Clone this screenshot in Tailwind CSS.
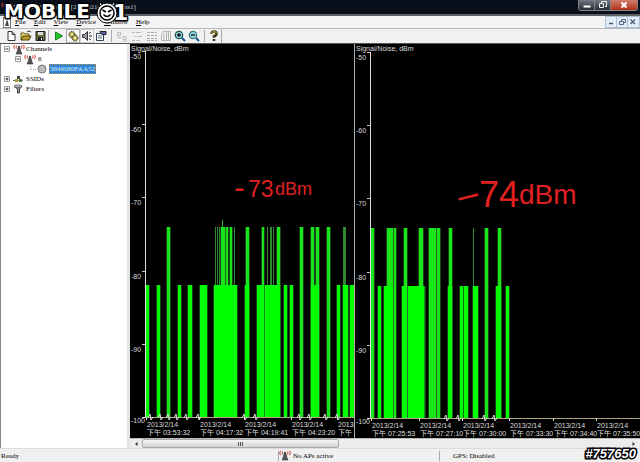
<!DOCTYPE html>
<html lang="en">
<head>
<meta charset="utf-8">
<meta name="viewport" content="width=device-width, initial-scale=1">
<title>Network Stumbler</title>
<script src="https://cdn.jsdelivr.net/npm/@tailwindcss/browser@4"></script>
</head>
<body class="relative flex h-screen flex-col overflow-hidden bg-[#f0f0f0] font-['Liberation_Serif','Noto_Sans_CJK_TC',serif] text-[7px] leading-[10px] text-black">

<svg class="hidden" aria-hidden="true">
  <symbol id="antenna" viewBox="0 0 12 11">
    <path d="M5 4h2l1 4 1 2H3l1-2z" fill="#555" stroke="#333" stroke-width=".6"/>
    <circle cx="6" cy="3" r="1.2" fill="#444"/>
    <path d="M3.500 1.500q-1 1.500 0 3M1.500.8q-1.500 2.200 0 4.400M8.500 1.500q1 1.500 0 3M10.500.8q1.500 2.200 0 4.400" fill="none" stroke="#c8443c" stroke-width="1"/>
  </symbol>
  <symbol id="minus" viewBox="0 0 8 8"><path d="M1.500 1.500h5v5h-5z" fill="#fff" stroke="#999"/><path d="M2.500 4h3" stroke="#333"/></symbol>
  <symbol id="plus" viewBox="0 0 8 8"><path d="M1.500 1.500h5v5h-5z" fill="#fff" stroke="#999"/><path d="M2.500 4h3M4 2.500v3" stroke="#333"/></symbol>
</svg>

<!-- Title bar -->
<header class="flex h-4 shrink-0 items-start border-b-2 border-[#5d6065] bg-[#0a101b] pl-px pr-[2px] text-[#c5cad2]">
  <svg class="mt-[2px] h-[11px] w-3"><use href="#antenna"/></svg>
  <h1 class="mt-[2px] flex-1 whitespace-nowrap">Network Stumbler - [20130214155353.ns1]</h1>
  <div class="flex h-[11px] overflow-hidden rounded-b-[3px] border border-t-0 border-[#83878d]">
    <button aria-label="Minimize" class="flex w-4 items-center justify-center border-r border-[#83878d] bg-linear-to-b from-[#737983] to-[#292f39]"><svg width="10" height="8"><path d="M1.500 4.500h7v2h-7z" fill="#fff"/></svg></button>
    <button aria-label="Restore" class="flex w-4 items-center justify-center border-r border-[#83878d] bg-linear-to-b from-[#737983] to-[#292f39]"><svg width="10" height="8" fill="none" stroke="#eee"><path d="M3.500 2V.5h5v5H7"/><path d="M1.500 2.500h4v4h-4z"/></svg></button>
    <button aria-label="Close" class="flex w-[26px] items-center justify-center bg-linear-to-b from-[#cf7e6d] to-[#b32d14]"><svg width="10" height="8" stroke="#fff" stroke-width="2"><path d="M2.500 1.500l5 5M7.500 1.500l-5 5"/></svg></button>
  </div>
</header>

<!-- Menu bar -->
<nav class="flex h-3 shrink-0 items-center gap-2 bg-[#f3f3f3] pl-[3px]">
  <svg width="8" height="11" class="-mr-1 border border-[#777] bg-white"><path d="M3 1L5 8H1z" fill="#444"/></svg>
  <button><u>F</u>ile</button>
  <button><u>E</u>dit</button>
  <button><u>V</u>iew</button>
  <button><u>D</u>evice</button>
  <button><u>W</u>indow</button>
  <button><u>H</u>elp</button>
  <div class="ml-auto flex h-full divide-x divide-[#a9bdd4] border border-[#a9bdd4] bg-[#e2edf8]">
    <button aria-label="Minimize document" class="w-[11px]"><svg width="10" height="10"><path d="M3 6.500h4" stroke="#456" stroke-width="1.500"/></svg></button>
    <button aria-label="Restore document" class="w-[11px]"><svg width="10" height="10" fill="none" stroke="#567"><path d="M4.500 4V2.500h4v3H7M2.500 4.500h4v3h-4z"/></svg></button>
    <button aria-label="Close document" class="w-[11px]"><svg width="10" height="10" stroke="#567" stroke-width="1.500"><path d="M2.500 2.500l4.500 4.500M7 2.500L2.500 7"/></svg></button>
  </div>
</nav>

<!-- Toolbar -->
<div role="toolbar" class="flex h-4 shrink-0 items-center border-t border-b border-t-[#b8b8b8] border-b-[#555] bg-[#f1f1f1] pl-1">
  <button aria-label="New" class="w-[15px]"><svg width="14" height="14"><path d="M4 2.500h4l3 3v6H4z" fill="#fff" stroke="#333"/><path d="M8 2.500v3h3" fill="none" stroke="#333"/></svg></button>
  <button aria-label="Open" class="w-[14px]"><svg width="14" height="14"><path d="M2 11V4h3l1 1h4v2" fill="#f2dc73" stroke="#6b5c1a"/><path d="M2 11l2-4h8l-2 4z" fill="#bd9d2c" stroke="#4c4210"/><path d="M8 3q2-2 4 0" fill="none" stroke="#333"/></svg></button>
  <button aria-label="Save" class="w-[15px]"><svg width="14" height="14"><path d="M3 2.500h9v9H3z" fill="#69693c" stroke="#222"/><path d="M5 3h5v3H5z" fill="#ddd"/><path d="M5 8h5v3H5z" fill="#222"/><path d="M8 9h1v2H8z" fill="#eee"/></svg></button>
  <span class="mr-[3px] h-3 w-px bg-[#aaa]"></span>
  <button aria-label="Enable scan" class="w-[14px]"><svg width="14" height="14"><path d="M3.500 3l7 4-7 4z" fill="#20ca28" stroke="#167c1c"/></svg></button>
  <button aria-label="Auto reconfigure" aria-pressed="true" class="w-[14px] border border-[#aaa] bg-[#fafafa]"><svg width="12" height="12"><g fill="#b5aa4c" stroke="#363418"><circle cx="5" cy="4.500" r="3" stroke-dasharray="1.500 .6"/><circle cx="8" cy="8" r="3" stroke-dasharray="1.500 .6"/></g><circle cx="5" cy="4.500" r="1" fill="#fff"/><circle cx="8" cy="8" r="1" fill="#fff"/></svg></button>
  <button aria-label="Sound" aria-pressed="true" class="w-[14px] border border-[#ccc] bg-[#fafafa]"><svg width="12" height="12"><path d="M1.500 4.500h2l3-3v9l-3-3h-2z" fill="#99a" stroke="#333"/><path d="M8 6h3M8 3.500L10 2M8 8.500l2 1.500" stroke="#333"/></svg></button>
  <button aria-label="Options" class="w-[14px]"><svg width="14" height="14"><path d="M2.500 4.500h7v7h-7z" fill="#fff" stroke="#345"/><path d="M4 7h4M4 9h4" stroke="#567"/><path d="M6 2.500h6v3H8z" fill="#5a6caa" stroke="#223"/></svg></button>
  <span class="mr-1 ml-[3px] h-3 w-px bg-[#aaa]"></span>
  <button disabled aria-label="Large icons" class="w-[14px]"><svg width="12" height="14" fill="none" stroke="#bbb"><path d="M1.500 3.500h3v3h-3zM7 7.500h3v3H7zM1 8.500h4M7 12h4"/></svg></button>
  <button disabled aria-label="Small icons" class="w-[15px]"><svg width="14" height="14" stroke="#bbb"><path d="M2 3.500h3M6 3.500h5M4 7.500h3M8 7.500h4M2 11.500h3M6 11.500h4"/></svg></button>
  <button disabled aria-label="List" class="w-[14px]"><svg width="14" height="14" stroke="#aaa" stroke-dasharray="3 1"><path d="M2 3.500h10M2 6.500h10M2 9.500h10M2 11.500h10"/></svg></button>
  <button disabled aria-label="Details" class="w-[14px]"><svg width="14" height="14" fill="none" stroke="#b3b3b3"><path d="M2.500 5.500l2-3h7v9h-9zM5 5v6M7.500 3v8M9.500 3v8"/></svg></button>
  <button aria-label="Zoom in" class="w-[14px]"><svg width="14" height="14"><circle cx="6" cy="6" r="3.700" fill="#8ed7dc" stroke="#204f57" stroke-width="1.200"/><path d="M9 9l3 3" stroke="#14528c" stroke-width="2"/><path d="M4 6h4M6 4v4" stroke="#111" stroke-width="1.300"/></svg></button>
  <button aria-label="Zoom out" class="w-[15px]"><svg width="14" height="14"><circle cx="6" cy="6" r="3.700" fill="#8ed7dc" stroke="#3b7780" stroke-width="1.200"/><path d="M9 9l3 3" stroke="#14528c" stroke-width="2"/><path d="M4 6h4" stroke="#111" stroke-width="1.300"/></svg></button>
  <span class="mx-[2px] h-3 w-px bg-[#aaa]"></span>
  <button aria-label="Help" class="w-[14px]"><svg width="14" height="14" fill="none"><path d="M4.500 5q0-2.500 2.500-2.500t2.500 2.200Q9.500 6.500 7 7.500v1.200M7 10v2" stroke="#3a3510" stroke-width="2.600"/><path d="M4.500 4.800q.2-2.200 2.500-2.200t2.400 2" stroke="#c9b54a"/></svg></button>
  <span class="h-full w-px bg-[#aaa]"></span>
</div>

<main class="flex min-h-0 flex-1">
  <!-- Channel tree -->
  <aside class="w-[130px] shrink-0 border-r-3 border-l border-r-[#e4e4e4] border-l-[#888] bg-white">
    <ul>
      <li class="flex h-[10px] items-center pl-[2px]"><svg class="size-2"><use href="#minus"/></svg><svg class="mr-px ml-[2px] h-[11px] w-3"><use href="#antenna"/></svg><span>Channels</span></li>
      <li class="flex h-[10px] items-center pl-[13px]"><svg class="size-2"><use href="#minus"/></svg><svg class="mr-[2px] ml-[2px] h-[11px] w-3"><use href="#antenna"/></svg>6</li>
      <li class="flex h-[10px] items-center pl-[29px]"><svg width="18" height="10" class="mr-px"><path d="M.5 0v5.500H7" fill="none" stroke="#aaa" stroke-dasharray="1 1"/><circle cx="12" cy="5" r="4" fill="#bbb" stroke="#777"/></svg><a href="#" class="bg-[#2f86d6] px-px text-[#d6ebff] outline-1 -outline-offset-1 outline-dotted outline-[#bb8844]">3846080FAA52</a></li>
      <li class="flex h-[10px] items-center pl-[2px]"><svg class="size-2"><use href="#plus"/></svg><svg width="12" height="10" class="mr-[2px] ml-px"><path d="M1 6.500h10" stroke="#777"/><path d="M5 2h3v3H5z" fill="#444"/><path d="M3 5h3v3H3z" fill="#ab9c30"/><path d="M7 5h3v3H7z" fill="#567a45"/></svg>SSIDs</li>
      <li class="flex h-[10px] items-center pl-[2px]"><svg class="size-2"><use href="#plus"/></svg><svg width="12" height="10" class="mr-[2px] ml-px"><path d="M2 2.500h8L7.500 5v4h-2V5z" fill="#999" stroke="#444"/><ellipse cx="6" cy="2.200" rx="4" ry="1.200" fill="#ccc" stroke="#444" stroke-width=".7"/></svg>Filters</li>
    </ul>
  </aside>

  <section class="flex min-w-0 flex-1 flex-col bg-black">
    <div class="grid min-h-0 flex-1 grid-cols-[225fr_285fr] font-['Liberation_Sans','Noto_Sans_CJK_TC',sans-serif]">
      <svg id="chart-a" class="h-full w-full border-r border-[#aaa] bg-black" viewBox="130 44 224 394" preserveAspectRatio="xMinYMin slice" fill="#ddd" font-size="7">
        <text x="131" y="51">Signal/Noise, dBm</text>
        <g fill="#e02020">
          <text x="234" y="198" font-size="32">-</text><text x="248" y="197" font-size="23">73</text><text x="275" y="195" font-size="18">dBm</text>
        </g>
      </svg>
      <svg id="chart-b" class="h-full w-full bg-black" viewBox="355 44 285 394" preserveAspectRatio="xMinYMin slice" fill="#ddd" font-size="7">
        <text x="356" y="51">Signal/Noise, dBm</text>
        <g fill="#e02020">
          <text x="458" y="207" font-size="36" transform="rotate(-14 465 196)">–</text><text x="479" y="207" font-size="36">74</text><text x="519" y="204" font-size="28">dBm</text>
        </g>
      </svg>
    </div>
    <!-- Horizontal scroll bar -->
    <div class="flex h-[10px] shrink-0 items-center justify-between border-t border-[#bbb] bg-[#ececec]">
      <div class="flex h-full w-[41%] items-center">
        <button aria-label="Scroll left" class="flex h-full w-3 shrink-0 items-center justify-center"><svg width="4" height="6"><path d="M3.500 1v4L1 3z" fill="#333"/></svg></button>
        <div class="flex h-full flex-1 items-center justify-center gap-px rounded-xs border border-[#aaa] bg-linear-to-b from-[#f6f6f6] to-[#d4d4d4]"><i class="h-1 w-px bg-[#555]"></i><i class="h-1 w-px bg-[#555]"></i><i class="h-1 w-px bg-[#555]"></i></div>
      </div>
      <button aria-label="Scroll right" class="flex h-full w-3 items-center justify-center"><svg width="4" height="6"><path d="M.5 1v4L3 3z" fill="#333"/></svg></button>
    </div>
  </section>
</main>

<!-- Status bar -->
<footer class="flex h-[14px] shrink-0 items-center border-t border-[#ddd] bg-[#f0f0f0]">
  <p class="w-[278px] shrink-0 pl-px">Ready</p>
  <p class="flex h-[10px] w-[161px] shrink-0 items-center gap-[2px] border-l border-[#aaa]"><svg class="h-[11px] w-3"><use href="#antenna"/></svg>No APs active</p>
  <p class="h-[10px] flex-1 border-l border-[#aaa] pl-[13px]">GPS: Disabled</p>
</footer>

<!-- Watermarks -->
<svg class="pointer-events-none absolute top-0 left-0" width="130" height="28" role="img" aria-label="Mobile01">
  <g font-family="DejaVu Sans" font-weight="bold" fill="#fff" stroke="#000" stroke-width="3" stroke-linejoin="round" paint-order="stroke">
    <text x="4" y="18" font-size="20">MOBILE</text>
    <text x="113" y="20" font-size="22">1</text>
  </g>
  <path d="M100 8l-1-6 5 3h6l5-3-1 6z" fill="#fff" stroke="#000"/>
  <circle cx="107" cy="13" r="10" fill="#fff" stroke="#000"/>
  <circle cx="107" cy="13" r="7" fill="#fff" stroke="#000" stroke-width="1.500"/>
  <path d="M102.500 10l3.500 2M111.500 10l-3.500 2M103.500 14.500q3.500 4 7 0" fill="none" stroke="#000" stroke-width="1.500"/>
</svg>
<p class="pointer-events-none absolute right-1 bottom-0 font-['Liberation_Sans',sans-serif] text-[13px] leading-4 font-bold text-white italic [paint-order:stroke] [-webkit-text-stroke:3px_black]">#757650</p>

<script>
  // Bars are [x, width]; tall bars reach -74 dBm, short ones -82 dBm.
  const charts = [
    { id: 'chart-a', axis: 145, top: 51, end: 354, base: 417, labelX: 130,
      low: [[146,3],[157,3],[178,3],[188,4],[200,7],[214,23],[245,4],[257,23],[284,3],[290,3],[311,8],[337,3],[343,5],[350,4]],
      high: [[167,3],[221,4],[226,2],[230,2],[246,3],[262,2],[277,3],[300,3],[311,3],[316,3],[327,3]],
      dim: [[215,1],[217,1],[219,1],[234,1],[267,1],[270,2],[273,1],[343,3]],
      spike: [222, 220], gaps: [264],
      breaks: [148,158,166,174,184,196,242,253,297,307,323,335],
      times: [[147,'03:53:32'],[200,'04:17:32'],[245,'04:19:41'],[292,'04:23:20'],[338,'04:25:02']] },
    { id: 'chart-b', axis: 370, top: 52, end: 640, base: 418, labelX: 355,
      low: [[378,3],[384,9],[402,5],[408,17],[448,4],[460,3],[464,4],[473,5],[496,5],[506,3]],
      high: [[371,3],[387,6],[394,2],[404,3],[419,4],[429,7],[437,3],[449,3],[485,3],[498,3]],
      dim: [[473,1]], gaps: [424],
      breaks: [444,456,482,492],
      times: [[372,'07:25:53'],[420,'07:27:10'],[463,'07:30:00'],[510,'07:33:30'],[554,'07:34:40'],[597,'07:35:50']] }
  ];
  for (const c of charts) {
    const dy = c.base - 417;
    const bars = (list, top, fill) => list.map(([x, w]) =>
      `<rect x="${x}" y="${top}" width="${w}" height="${c.base - top}" fill="${fill}"/>` ).join('');
    const edge = (list, top) => list.map(([x, w]) =>
      `<rect x="${x - 0.5}" y="${top}" width="${w + 1}" height="${c.base - top}" fill="#2b8a2b"/>` ).join('');
    let s = '';
    s += bars(c.dim, 227 + dy, '#2f8a2f') + edge(c.high, 227 + dy) + edge(c.low, 285 + dy);
    s += bars(c.high, 227 + dy, '#19e619') + bars(c.low, 285 + dy, '#00ff00');
    if (c.spike) s += `<rect x="${c.spike[0]}" y="${c.spike[1]}" width="1" height="8" fill="#2fc02f"/>`;
    s += bars(c.gaps.map(x => [x, 1]), 285 + dy, '#1a8a1a');
    s += `<path d="M${c.axis + 0.5} ${c.top}V${c.base}" stroke="#ddd" fill="none"/>`;
    s += `<path d="M${c.axis} ${c.base + 0.5}H${c.end}" stroke="#b3a582" fill="none"/>`;
    ['-50','-60','-70','-80','-90','-100'].forEach((t, i) => {
      const y = Math.round(c.top + i * 73.2);
      s += `<path d="M${c.axis - 3} ${y + 0.5}h3" stroke="#ccc"/><text x="${c.labelX + 1}" y="${y + (i === 5 ? 6 : 8)}">${t}</text>`;
    });
    for (const x of c.breaks)
      s += `<path d="M${x} ${c.base + 1}l2-4 1 6 2-3" fill="none" stroke="#ddd"/>`;
    for (const [x, t] of c.times)
      s += `<path d="M${x - 0.5} ${c.base}v3" stroke="#ddd"/><text x="${x}" y="${c.base + 10}">2013/2/14</text><text x="${x}" y="${c.base + 18}">下午 ${t}</text>`;
    document.getElementById(c.id).insertAdjacentHTML('beforeend', s);
  }
</script>
</body>
</html>
